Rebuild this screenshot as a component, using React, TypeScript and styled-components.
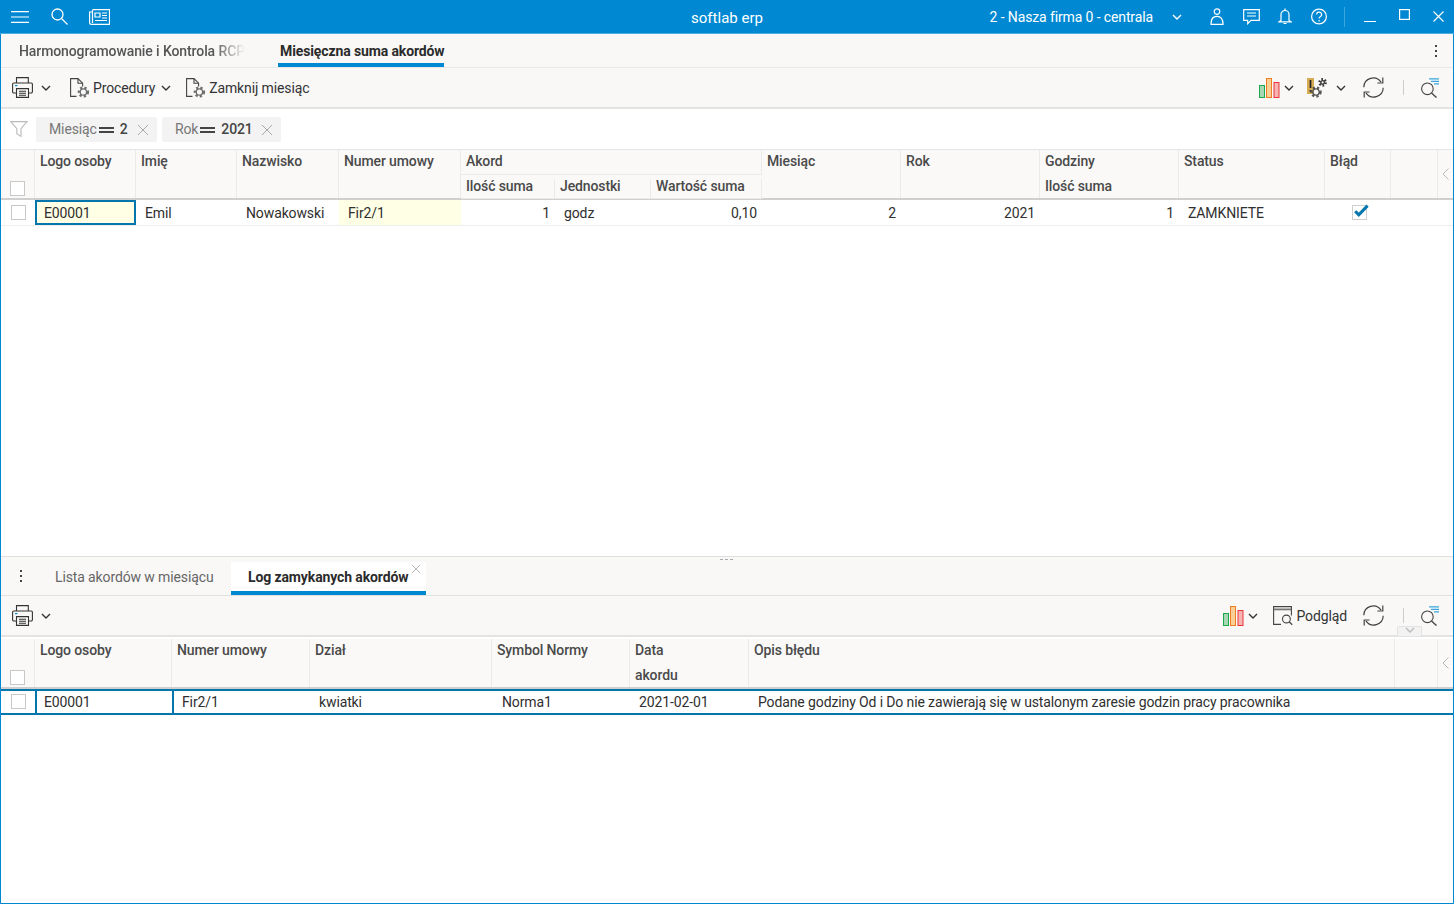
import React from "react";
import styled, { createGlobalStyle } from "styled-components";

const Global = createGlobalStyle`
  html, body { margin: 0; padding: 0; height: 100%; overflow: hidden; background: #fff; }
  body { font-family: Roboto, "Liberation Sans", sans-serif; font-size: 14px; color: #2f2f2f; letter-spacing: -0.12px; }
  #root { height: 100%; }
  * { box-sizing: border-box; }
`;

const Page = styled.div`
  width: 1454px; height: 904px; display: flex; flex-direction: column;
  border-left: 1px solid #0089d2; border-right: 1px solid #0089d2; border-bottom: 1px solid #0089d2;
  background: #fff;
`;
const TitleBar = styled.header`
  height: 33px; margin: 0 -1px; background: #0089d2; color: #fff; display: grid;
  grid-template-columns: 1fr auto 1fr; align-items: center; flex: none;
  border-bottom: 1px solid #4aaee2; box-sizing: content-box;
`;
const TitleLeft = styled.div`display: flex; align-items: center; gap: 21px; padding-left: 11px;`;
const AppName = styled.div`font-size: 15px; padding-top: 2px; letter-spacing: 0;`;
const TitleRight = styled.div`display: flex; align-items: center; justify-content: flex-end; color: #fff;`;
const Company = styled.span`font-size: 14px; margin-right: 19px;`;
const TitleIcons = styled.div`display: flex; align-items: center; margin-left: 18px;`;
const TitleBtn = styled.div`width: 34px; display: flex; justify-content: center; align-items: center;`;
const TitleSep = styled.div`width: 1px; height: 20px; background: #3ba6e0; margin: 0 9px 0 8px;`;
const WindowBtns = styled.div`display: flex; align-items: center; gap: 2px;`;
const WinBtn = styled.div<{ $pb?: number }>`width: 32px; display: flex; justify-content: center; align-items: center; height: 20px; padding-bottom: ${p => p.$pb ?? 0}px;`;

const MainPane = styled.section`flex: 1; display: flex; flex-direction: column; min-height: 0;`;
const TabsBar = styled.div`
  height: 34px; background: #f9f8f7; border-bottom: 1px solid #e8e8e6; display: flex; align-items: stretch; flex: none; position: relative;
`;
const FadedTab = styled.div`
  margin-left: 18px; width: 226px; white-space: nowrap; overflow: hidden; color: #555; padding-top: 9px; font-weight: 500; font-size: 14px;
  mask-image: linear-gradient(to right, #000 86%, rgba(0,0,0,.15) 98%, transparent);
  letter-spacing: -0.1px;
`;
const ActiveTab = styled.div`
  margin-left: 33px; width: 166px; font-weight: 700; color: #2b2b2b; padding-top: 9px; border-bottom: 4px solid #0089d2; height: 33px; white-space: nowrap;
  font-size: 14px; letter-spacing: -0.12px; padding-left: 2px;
`;
const Kebab = styled.div`position: absolute; right: 16px; top: 11px; display: flex; flex-direction: column; gap: 3px;`;
const Dot = styled.i`width: 2px; height: 2px; background: #444; display: block;`;

const Toolbar = styled.div`
  height: 41px; background: #f9f8f7; border-bottom: 2px solid #e3e3e1; display: flex; align-items: center; padding: 0 0 0 11px; flex: none; position: relative;
`;
const ToolText = styled.span`font-size: 14px; color: #333; margin-left: 3px;`;
const Spacer = styled.div`flex: 1;`;
const VSep = styled.div`width: 1px; height: 15px; background: #ccc;`;
const Group = styled.div<{ $ml?: number; $mr?: number }>`
  display: flex; align-items: center; margin-left: ${p => p.$ml ?? 0}px; margin-right: ${p => p.$mr ?? 0}px;
`;

const FilterBar = styled.div`height: 40px; display: flex; align-items: center; padding-left: 9px; flex: none; background: #fff;`;
const Chip = styled.div<{ $w: number }>`
  height: 25px; width: ${p => p.$w}px; background: #f3f3f3; border-radius: 2px; display: flex; align-items: center; margin-right: 5px; padding-left: 13px; color: #777; position: relative;
`;
const ChipEq = styled.i`display: inline-block; width: 15px; height: 6px; border-top: 2px solid #444; border-bottom: 2px solid #444; margin: 1px 0 0 2px;`;
const ChipVal = styled.b`font-weight: 500; color: #444; margin-left: 6px;`;
const ChipClose = styled.span`position: absolute; right: 8px; top: 7px; display: flex;`;

const HeaderGrid = styled.div<{ $cols: string; $h: number; $top?: string }>`
  display: grid; grid-template-columns: ${p => p.$cols}; height: ${p => p.$h}px;
  background: #faf9f8; border-top: ${p => p.$top ?? "1px solid #e5e5e3"}; border-bottom: 2px solid #cfcfcf; flex: none;
`;
const HCell = styled.div<{ $col?: number }>`
  grid-column: ${p => p.$col ?? "auto"}; grid-row: 1 / span 2; border-right: 1px solid #eaeaea; padding: 3px 0 0 5px; font-weight: 500; font-size: 14px; color: #4a4a4a; position: relative; white-space: nowrap;
`;
const HSecond = styled.div`position: absolute; left: 5px; top: 28px; font-weight: 500;`;
const HGroup = styled.div<{ $start: number; $span: number }>`
  grid-column: ${p => p.$start} / span ${p => p.$span}; grid-row: 1; height: 25px; border-bottom: 1px solid #eaeaea; border-right: 1px solid #eaeaea; padding: 3px 0 0 5px; font-weight: 500; color: #4a4a4a;
`;
const HSub = styled.div<{ $col: number }>`
  grid-column: ${p => p.$col}; grid-row: 2; border-right: 1px solid #eaeaea; padding: 0 0 0 5px; font-weight: 500; color: #4a4a4a; white-space: nowrap; border-bottom: 1px solid #eaeaea; line-height: 15px; margin-bottom: -1px;
`;
const HCheckCell = styled.div`grid-row: 1 / span 2; border-right: 1px solid #eaeaea; position: relative;`;
const HArrow = styled.div<{ $col?: number }>`grid-column: ${p => p.$col ?? "auto"}; grid-row: 1 / span 2; display: flex; align-items: flex-start; justify-content: center; padding-top: 18px;`;
const Check = styled.i<{ $left: number; $top: number }>`
  position: absolute; left: ${p => p.$left}px; top: ${p => p.$top}px; width: 15px; height: 15px; border: 1px solid #c8c8c8; background: #fff; display: block;
`;
const Row = styled.div<{ $cols: string; $sel?: boolean }>`
  display: grid; grid-template-columns: ${p => p.$cols}; height: 26px; flex: none; align-items: stretch; position: relative;
  border-bottom: ${p => p.$sel ? "2px solid #0476ae" : "1px solid #eeeeee"};
  border-top: ${p => p.$sel ? "2px solid #0476ae" : "none"};
`;
const Cell = styled.div<{ $right?: boolean; $yellow?: boolean; $focus?: boolean; $leftBar?: boolean; $center?: boolean; $pl?: number }>`
  padding: ${p => p.$right ? "0 5px 0 0" : `0 0 0 ${p.$pl ?? 9}px`}; display: flex; align-items: center;
  justify-content: ${p => p.$center ? "center" : p.$right ? "flex-end" : "flex-start"};
  font-size: 14px; color: #2f2f2f; white-space: nowrap; position: relative;
  background: ${p => p.$yellow ? "#ffffe6" : "transparent"};
  ${p => p.$focus ? "border: 2px solid #0476ae; padding-left: 7px;" : ""}
  ${p => p.$leftBar ? "border-left: 2px solid #0476ae;" : ""}
`;
const CheckWrap = styled.div`display: flex; margin-bottom: 2px;`;
const CheckCell = styled.div`position: relative;`;
const Blank = styled.div`flex: 1; background: #fff;`;

const Splitter = styled.div`height: 1px; background: #dfdfdd; position: relative; flex: none; z-index: 1;`;
const Grip = styled.i`position: absolute; left: 719px; top: 3px; width: 14px; height: 1px; background: repeating-linear-gradient(to right, #aaa 0 3px, transparent 3px 5px); display: block;`;
const BottomPane = styled.section`height: 346px; display: flex; flex-direction: column; flex: none;`;
const BottomTabs = styled.div`height: 39px; background: #f9f8f7; border-bottom: 1px solid #e0e0de; display: flex; position: relative; flex: none;`;
const BottomKebab = styled.div`width: 38px; display: flex; flex-direction: column; gap: 3px; padding: 13px 0 0 19px;`;
const PlainTab = styled.div`color: #666; width: 192px; padding: 12px 0 0 16px; white-space: nowrap; font-size: 14px;`;
const WhiteTab = styled.div`
  width: 195px; height: 33px; margin-top: 5px; background: #fff; border-bottom: 4px solid #0089d2; font-weight: 700; padding: 7px 0 0 17px; position: relative; color: #2b2b2b; white-space: nowrap;
  font-size: 14px; letter-spacing: -0.12px;
`;
const TabClose = styled.span`position: absolute; right: 5px; top: 2px; display: flex;`;
const CollapseTab = styled.div`
  position: absolute; left: 1396px; bottom: -1px; width: 25px; height: 10px; background: #f2f2f2; border: 1px solid #e2e2e2; border-bottom: none; border-radius: 2px 2px 0 0; display: flex; justify-content: center;
`;

const Chev = ({ c = "#333", w = 10 }: { c?: string; w?: number }) => (
  <svg width={w} height="6" viewBox="0 0 10 6" fill="none" stroke={c} strokeWidth="1.4"><path d="M1 1l4 4 4-4" /></svg>
);
const Menu = () => <svg width="19" height="12" viewBox="0 0 19 12" stroke="#fff" strokeWidth="1.2"><path d="M0 .6h18M0 6h18M0 11.4h18" /></svg>;
const Search = () => <svg width="17" height="17" viewBox="0 0 17 17" fill="none" stroke="#fff" strokeWidth="1.3"><circle cx="6.5" cy="6.5" r="5.5" /><path d="M10.5 10.5l6 6" /></svg>;
const News = () => (
  <svg width="21" height="16" viewBox="0 0 21 16" fill="none" stroke="#fff" strokeWidth="1.2">
    <path d="M3.5.6h17v14.8H2.5A1.9 1.9 0 0 1 .6 13.5V3h2.9" /><path d="M3.5 1v13" />
    <path d="M6 4h5v4H6zM13 4h5M13 6.5h5M13 9h5M6 11.5h12" />
  </svg>
);
const User = () => <svg width="14" height="17" viewBox="0 0 14 17" fill="none" stroke="#fff" strokeWidth="1.2"><circle cx="7" cy="3.6" r="2.8" /><path d="M1 16.3c0-4 .8-8 6-8s6 4 6 8z" /></svg>;
const Chat = () => <svg width="17" height="16" viewBox="0 0 17 16" fill="none" stroke="#fff" strokeWidth="1.2"><path d="M.7.7h15.6v10.6H8l-3.3 3.4v-3.4h-4z" /><path d="M4 4h9M4 7h9" /></svg>;
const Bell = () => <svg width="14" height="17" viewBox="0 0 14 17" fill="none" stroke="#fff" strokeWidth="1.2"><path d="M7 .5v1.6M3 12.5V6.5a4 4 0 0 1 8 0v6l2 1.3H1zM5.5 15.5h3" /></svg>;
const Help = () => (
  <svg width="17" height="17" viewBox="0 0 17 17" fill="none" stroke="#fff" strokeWidth="1.2"><circle cx="8" cy="8.5" r="7.4" /><path d="M5.6 6.6a2.5 2.5 0 1 1 3.6 2.2c-.8.4-1.1.9-1.1 1.8" /><path d="M8.1 12v1.4" /></svg>
);
const Minimize = () => <svg width="12" height="12" viewBox="0 0 12 12" stroke="#fff"><path d="M0 10.5h12" strokeWidth="1" /></svg>;
const Maximize = () => <svg width="11" height="11" viewBox="0 0 11 11" fill="none" stroke="#fff" strokeWidth="1.2"><rect x=".6" y=".6" width="9.8" height="9.8" /></svg>;
const CloseW = () => <svg width="11" height="11" viewBox="0 0 11 11" stroke="#fff" strokeWidth="1.1"><path d="M.5.5l10 10M10.5.5l-10 10" /></svg>;
const Printer = () => (
  <svg width="21" height="21" viewBox="0 0 21 21" fill="none" stroke="#333" strokeWidth="1.1">
    <path d="M4.5 6V.6h11.8V6" /><path d="M4.5 16H1.8A1.2 1.2 0 0 1 .6 14.8V7.2A1.2 1.2 0 0 1 1.8 6h17.4a1.2 1.2 0 0 1 1.2 1.2v7.6a1.2 1.2 0 0 1-1.2 1.2h-2.7" />
    <path d="M4.5 11.6h12v8.8h-12zM7 14.2h7M7 16.2h7M7 18.2h7" /><path d="M3 8.6h2.4" stroke="#0089d2" strokeWidth="1.2" />
  </svg>
);
const Gear = ({ x, y, r, c }: { x: number; y: number; r: number; c: string }) => {
  const outer = r + 1;
  const circ = 2 * Math.PI * outer;
  return (
    <g fill="none" stroke={c}>
      <circle cx={x} cy={y} r={r - 1.2} strokeWidth="1.3" />
      <circle cx={x} cy={y} r={outer - 1} strokeWidth="2.6" strokeDasharray={`${circ / 16} ${circ / 16}`} />
    </g>
  );
};
const DocGear = () => (
  <svg width="21" height="20" viewBox="0 0 21 20" fill="none" stroke="#444" strokeWidth="1.1">
    <path d="M7.5 18.4H1.6V.6h7.4l4.6 4.6v3.4" /><path d="M9 .6v4.6h4.6" />
    <Gear x={14.4} y={14} r={4.4} c="#6e6e6e" />
  </svg>
);
const Funnel = () => <svg width="18" height="16" viewBox="0 0 18 16" fill="none" stroke="#bbb" strokeWidth="1.1"><path d="M.8.6h16.2l-6 7v7.8l-4.2-2.6V7.6z" /></svg>;
const XIcon = ({ s = 12, c = "#aaa" }: { s?: number; c?: string }) => <svg width={s} height={s} viewBox="0 0 12 12" stroke={c} strokeWidth="1"><path d="M1 1l10 10M11 1L1 11" /></svg>;
const Bars = () => (
  <svg width="21" height="20" viewBox="0 0 21 20">
    <rect x=".5" y="7.5" width="5" height="12" fill="#a7d8b4" stroke="#1ea84d" />
    <rect x="7.5" y=".5" width="5" height="19" fill="#f9cf95" stroke="#ef7d22" />
    <rect x="15" y="4.5" width="5" height="15" fill="#f8b3b3" stroke="#e8363a" />
  </svg>
);
const WarnGear = () => (
  <svg width="20" height="20" viewBox="0 0 20 20" fill="none">
    <rect x="0" y="0" width="7" height="16" fill="#d6ab54" />
    <path d="M3.5 2v8" stroke="#222" strokeWidth="1.7" /><path d="M3.5 12v2" stroke="#222" strokeWidth="1.7" />
    <Gear x={9} y={14} r={4.4} c="#555" />
    <Gear x={15.6} y={4.4} r={3} c="#333" />
  </svg>
);
const Refresh = () => (
  <svg width="21" height="21" viewBox="0 0 21 21" fill="none" stroke="#444" strokeWidth="1.2">
    <path d="M.8 10.2A9.4 9.4 0 0 1 18 5.2" /><path d="M19.8 .6v5.4h-5.4" />
    <path d="M20.2 10.8A9.4 9.4 0 0 1 3 15.8" /><path d="M1.2 20.4V15h5.4" />
  </svg>
);
const SearchLines = () => (
  <svg width="20" height="20" viewBox="0 0 20 20" fill="none">
    <circle cx="7.4" cy="10.8" r="5.8" stroke="#444" strokeWidth="1.1" /><path d="M11.5 15l5 4.6" stroke="#444" strokeWidth="1.3" />
    <path d="M9 .8h10M11 3.3h8M14 5.8h5" stroke="#38a5e0" strokeWidth="1.2" />
  </svg>
);
const Preview = () => (
  <svg width="20" height="19" viewBox="0 0 20 19" fill="none" stroke="#444" strokeWidth="1.1">
    <path d="M8 18.4H.6V.6h17.8v9" /><path d="M1 3.4h17" stroke="#777" strokeWidth="1.8" />
    <circle cx="13.4" cy="13" r="3.9" /><path d="M16.2 15.8l3 3" strokeWidth="1.3" />
  </svg>
);
const CheckedBox = () => (
  <svg width="18" height="16" viewBox="0 0 18 16" fill="none">
    <rect x=".5" y="1.5" width="14" height="14" fill="#fff" stroke="#cfcfcf" />
    <path d="M3.2 7.2l3.6 3.6L15.6 1.6" stroke="#0476ae" strokeWidth="3" />
  </svg>
);
const ChevLeft = () => <svg width="7" height="12" viewBox="0 0 7 12" fill="none" stroke="#bbb" strokeWidth="1"><path d="M6.5.5L1 6l5.5 5.5" /></svg>;
const Kebabs = () => <><Dot /><Dot /><Dot /></>;

const topCols = "34px 101px 101px 102px 122px 94px 96px 111px 139px 139px 139px 146px 66px 47px 15px";
const botCols = "34px 137px 138px 182px 138px 119px 646px 43px 15px";

export default function App() {
  return (
    <Page>
      <Global />
      <TitleBar>
        <TitleLeft><Menu /><Search /><News /></TitleLeft>
        <AppName>softlab erp</AppName>
        <TitleRight>
          <Company>2 - Nasza firma 0 - centrala</Company>
          <Chev c="#fff" />
          <TitleIcons>
            <TitleBtn><User /></TitleBtn>
            <TitleBtn><Chat /></TitleBtn>
            <TitleBtn><Bell /></TitleBtn>
            <TitleBtn><Help /></TitleBtn>
          </TitleIcons>
          <TitleSep />
          <WindowBtns>
            <WinBtn><Minimize /></WinBtn>
            <WinBtn $pb={4}><Maximize /></WinBtn>
            <WinBtn><CloseW /></WinBtn>
          </WindowBtns>
        </TitleRight>
      </TitleBar>

      <MainPane>
        <TabsBar>
          <FadedTab>Harmonogramowanie i Kontrola RCP</FadedTab>
          <ActiveTab>Miesięczna suma akordów</ActiveTab>
          <Kebab><Kebabs /></Kebab>
        </TabsBar>
        <Toolbar>
          <Printer />
          <Group $ml={8}><Chev /></Group>
          <Group $ml={18}><DocGear /><ToolText>Procedury</ToolText></Group>
          <Group $ml={6}><Chev /></Group>
          <Group $ml={14}><DocGear /><ToolText>Zamknij miesiąc</ToolText></Group>
          <Spacer />
          <Group><Bars /></Group>
          <Group $ml={4}><Chev /></Group>
          <Group $ml={13}><WarnGear /></Group>
          <Group $ml={9}><Chev /></Group>
          <Group $ml={17}><Refresh /></Group>
          <Group $ml={19}><VSep /></Group>
          <Group $ml={16} $mr={13}><SearchLines /></Group>
        </Toolbar>
        <FilterBar>
          <Funnel />
          <Group $ml={8} />
          <Chip $w={121}>Miesiąc<ChipEq /><ChipVal>2</ChipVal><ChipClose><XIcon /></ChipClose></Chip>
          <Chip $w={119}>Rok<ChipEq /><ChipVal>2021</ChipVal><ChipClose><XIcon /></ChipClose></Chip>
        </FilterBar>
        <HeaderGrid $cols={topCols} $h={51}>
          <HCheckCell><Check $left={9} $top={31} /></HCheckCell>
          <HCell>Logo osoby</HCell>
          <HCell>Imię</HCell>
          <HCell>Nazwisko</HCell>
          <HCell>Numer umowy</HCell>
          <HGroup $start={6} $span={3}>Akord</HGroup>
          <HCell $col={9}>Miesiąc</HCell>
          <HCell $col={10}>Rok</HCell>
          <HCell $col={11}>Godziny<HSecond>Ilość suma</HSecond></HCell>
          <HCell $col={12}>Status</HCell>
          <HCell $col={13}>Błąd</HCell>
          <HCell $col={14} />
          <HArrow $col={15}><ChevLeft /></HArrow>
          <HSub $col={6}>Ilość suma</HSub>
          <HSub $col={7}>Jednostki</HSub>
          <HSub $col={8}>Wartość suma</HSub>
        </HeaderGrid>
        <Row $cols={topCols}>
          <CheckCell><Check $left={10} $top={5} /></CheckCell>
          <Cell $yellow $focus>E00001</Cell>
          <Cell>Emil</Cell>
          <Cell>Nowakowski</Cell>
          <Cell $yellow>Fir2/1</Cell>
          <Cell $right>1</Cell>
          <Cell>godz</Cell>
          <Cell $right>0,10</Cell>
          <Cell $right>2</Cell>
          <Cell $right>2021</Cell>
          <Cell $right>1</Cell>
          <Cell>ZAMKNIETE</Cell>
          <Cell $center $pl={5}><CheckWrap><CheckedBox /></CheckWrap></Cell>
          <Cell />
          <Cell />
        </Row>
        <Blank />
      </MainPane>

      <Splitter><Grip /></Splitter>
      <BottomPane>
        <BottomTabs>
          <BottomKebab><Kebabs /></BottomKebab>
          <PlainTab>Lista akordów w miesiącu</PlainTab>
          <WhiteTab>Log zamykanych akordów<TabClose><XIcon s={10} /></TabClose></WhiteTab>
        </BottomTabs>
        <Toolbar>
          <Printer />
          <Group $ml={8}><Chev /></Group>
          <Spacer />
          <Group><Bars /></Group>
          <Group $ml={4}><Chev /></Group>
          <Group $ml={15}><Preview /><ToolText>Podgląd</ToolText></Group>
          <Group $ml={16}><Refresh /></Group>
          <Group $ml={19}><VSep /></Group>
          <Group $ml={16} $mr={13}><SearchLines /></Group>
          <CollapseTab><Chev c="#bbb" w={12} /></CollapseTab>
        </Toolbar>
        <HeaderGrid $cols={botCols} $h={52} $top="2px solid #fff">
          <HCheckCell><Check $left={9} $top={31} /></HCheckCell>
          <HCell>Logo osoby</HCell>
          <HCell>Numer umowy</HCell>
          <HCell>Dział</HCell>
          <HCell>Symbol Normy</HCell>
          <HCell>Data<HSecond>akordu</HSecond></HCell>
          <HCell>Opis błędu</HCell>
          <HCell />
          <HArrow><ChevLeft /></HArrow>
        </HeaderGrid>
        <Row $cols={botCols} $sel>
          <CheckCell><Check $left={10} $top={3} /></CheckCell>
          <Cell $leftBar $pl={7}>E00001</Cell>
          <Cell $leftBar $pl={8}>Fir2/1</Cell>
          <Cell>kwiatki</Cell>
          <Cell $pl={10}>Norma1</Cell>
          <Cell>2021-02-01</Cell>
          <Cell>Podane godziny Od i Do nie zawierają się w ustalonym zaresie godzin pracy pracownika</Cell>
          <Cell />
          <Cell />
        </Row>
        <Blank />
      </BottomPane>
    </Page>
  );
}
